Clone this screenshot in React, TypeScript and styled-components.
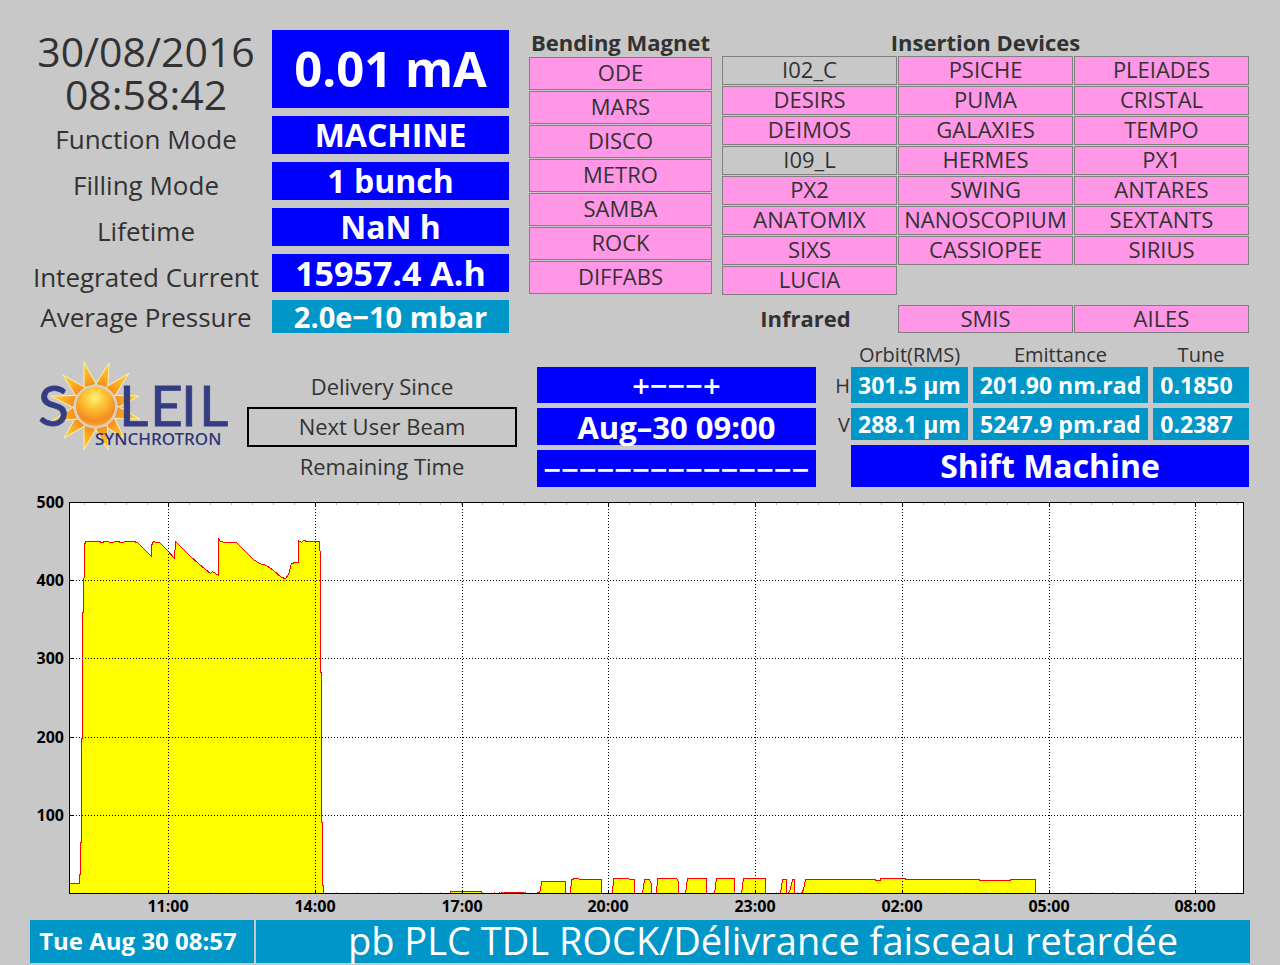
import React from "react";
import styled, { createGlobalStyle } from "styled-components";

const colors = {
  page: "#c8c8c8",
  ink: "#323232",
  blue: "#0000ff",
  teal: "#0096c8",
  pink: "#ff96e6",
  edge: "#808080",
};

const GlobalStyle = createGlobalStyle`
  *, *::before, *::after { box-sizing: border-box; }
  body {
    margin: 0;
    background: ${colors.page};
    color: ${colors.ink};
    font-family: "Open Sans", "Noto Sans", sans-serif;
  }
`;

const Page = styled.main`
  display: flex;
  flex-direction: column;
  padding: 30px 30px 2px;
`;

const Band = styled.section<{ $top?: number }>`
  display: flex;
  align-items: flex-start;
  margin: ${(p) => p.$top ?? 0}px 1px 0 0;
`;

const Part = styled.div<{ $grow: number; $left?: number; $top?: number }>`
  flex: ${(p) => p.$grow} 1 0;
  min-width: 0;
  margin-top: ${(p) => p.$top ?? 0}px;
  margin-left: ${(p) => p.$left ?? 0}px;
`;

/* Machine status */

const StatusGrid = styled.dl`
  display: grid;
  grid-template-columns: 232fr 237fr;
  grid-template-rows: 78px repeat(4, 38px) 33px;
  gap: 8px 10px;
  margin: 0;
`;

const Clock = styled.dt`
  align-self: start;
  text-align: center;
  font-size: 41px;
  line-height: 43px;
  white-space: nowrap;
`;

const StatusLabel = styled.dt<{ $drop?: boolean }>`
  display: flex;
  align-items: center;
  justify-content: center;
  padding-top: ${(p) => (p.$drop ? 8 : 0)}px;
  font-size: 26px;
  line-height: 30px;
  white-space: nowrap;
`;

const Readout = styled.dd<{ $size?: number; $teal?: boolean; $lift?: number }>`
  display: flex;
  align-items: center;
  justify-content: center;
  margin: 0;
  padding-bottom: ${(p) => p.$lift ?? 0}px;
  background: ${(p) => (p.$teal ? colors.teal : colors.blue)};
  color: #fff;
  font-size: ${(p) => p.$size ?? 32}px;
  font-weight: 700;
  line-height: 32px;
  white-space: nowrap;
`;

/* Beamlines */

const GroupTitle = styled.h2<{ $height: number }>`
  height: ${(p) => p.$height}px;
  margin: 0;
  text-align: center;
  font-size: 22px;
  font-weight: 700;
  line-height: 25px;
  white-space: nowrap;
`;

const BeamlineList = styled.ul<{ $columns: number; $row: number }>`
  display: grid;
  grid-template-columns: repeat(${(p) => p.$columns}, 1fr);
  grid-auto-rows: ${(p) => p.$row}px;
  gap: 1px;
  margin: 0;
  padding: 0;
  list-style: none;
`;

const Beamline = styled.li<{ $idle?: boolean }>`
  display: flex;
  align-items: center;
  justify-content: center;
  min-width: 0;
  padding-bottom: 3px;
  border: 1px solid ${colors.edge};
  background: ${(p) => (p.$idle ? "transparent" : colors.pink)};
  font-size: 22px;
  line-height: 24px;
  white-space: nowrap;
`;

const InfraredRow = styled.div`
  display: grid;
  grid-template-columns: 175fr 351fr;
  gap: 1px;
  margin-top: 10px;
`;

const InfraredTitle = styled.h2`
  margin: 0;
  padding-right: 8px;
  text-align: center;
  font-size: 22px;
  font-weight: 700;
  line-height: 27px;
`;

/* Delivery */

const DeliveryLabels = styled.div`
  display: grid;
  grid-auto-rows: 40px;
`;

const DeliveryLabel = styled.div<{ $framed?: boolean }>`
  display: flex;
  align-items: center;
  justify-content: center;
  padding-bottom: 2px;
  border: 2px solid ${(p) => (p.$framed ? "#000" : "transparent")};
  font-size: 22px;
  line-height: 24px;
  white-space: nowrap;
`;

const DeliveryValues = styled.div`
  display: grid;
  grid-template-rows: 36px 37px 37px;
  gap: 5px;
`;

const DeliveryValue = styled.div<{ $light?: boolean }>`
  display: flex;
  align-items: center;
  justify-content: center;
  background: ${colors.blue};
  color: #fff;
  font-size: 31px;
  font-weight: ${(p) => (p.$light ? 600 : 700)};
  line-height: 32px;
  white-space: nowrap;
`;

/* Beam parameters */

const BeamTable = styled.table`
  display: grid;
  grid-template-columns: 15px 117fr 175fr 96fr;
  grid-template-rows: 24px 41px 37px;
  column-gap: 5px;

  thead, tbody, tr { display: contents; }
`;

const ColumnHead = styled.th`
  padding: 0;
  font-size: 20px;
  font-weight: 400;
  line-height: 24px;
  white-space: nowrap;
`;

const RowHead = styled.th`
  display: flex;
  align-items: center;
  justify-content: flex-end;
  margin-right: -4px;
  padding: 0 0 4px;
  font-size: 20px;
  font-weight: 400;
`;

const BeamCell = styled.td`
  display: flex;
  align-items: center;
  justify-content: center;
  min-width: 0;
  margin-bottom: 5px;
  padding: 0;
  background: ${colors.teal};
  color: #fff;
  font-size: 23px;
  font-weight: 700;
  line-height: 24px;
  white-space: nowrap;

  &:last-child { padding-right: 9px; }
`;

const ShiftBanner = styled.div`
  display: flex;
  align-items: center;
  justify-content: center;
  height: 42px;
  margin-left: 20px;
  background: ${colors.blue};
  color: #fff;
  font-size: 32px;
  font-weight: 700;
  line-height: 32px;
`;

const LogoImage = styled.svg`
  display: block;
  width: 192px;
  height: 94px;
  margin-left: 7px;
`;

const ChartImage = styled.svg`
  display: block;
  width: 100%;
  height: auto;
`;

/* Message bar */

const MessageBar = styled.footer`
  display: grid;
  grid-template-columns: 224fr 994fr;
  gap: 2px;
`;

const MessageCell = styled.div`
  display: flex;
  align-items: center;
  justify-content: center;
  min-width: 0;
  height: 43px;
  background: ${colors.teal};
  color: #fff;
  line-height: 38px;
  white-space: nowrap;
`;

const MessageTime = styled(MessageCell)`
  padding: 0 8px 2px 0;
  font-size: 24px;
  font-weight: 700;
`;

const MessageText = styled(MessageCell)`
  padding: 0 0 4px 20px;
  font-size: 38px;
`;

const magnets = ["ODE", "MARS", "DISCO", "METRO", "SAMBA", "ROCK", "DIFFABS"];

const insertionDevices = [
  "I02_C", "PSICHE", "PLEIADES",
  "DESIRS", "PUMA", "CRISTAL",
  "DEIMOS", "GALAXIES", "TEMPO",
  "I09_L", "HERMES", "PX1",
  "PX2", "SWING", "ANTARES",
  "ANATOMIX", "NANOSCOPIUM", "SEXTANTS",
  "SIXS", "CASSIOPEE", "SIRIUS",
  "LUCIA",
];

const idle = new Set(["I02_C", "I09_L"]);

const SUN = { x: 58.5, y: 46.5 };

const rayTips: [number, number][] = [
  [47, 2], [72, 3], [92, 13], [102, 36], [103, 59], [87, 78],
  [71, 90], [47, 90], [27, 78], [15, 61], [14, 36], [26, 15],
];

function rayPath([tx, ty]: [number, number]) {
  const angle = Math.atan2(ty - SUN.y, tx - SUN.x);
  const at = (a: number) => `${SUN.x + 22 * Math.cos(a)} ${SUN.y + 22 * Math.sin(a)}`;
  return `M${at(angle - 0.29)}L${tx} ${ty}L${at(angle + 0.29)}Z`;
}

function Logo() {
  return (
    <LogoImage viewBox="0 0 192 94" role="img" aria-label="SOLEIL Synchrotron">
      <defs>
        <radialGradient id="disc" cx="0.48" cy="0.28" r="0.7">
          <stop offset="0" stopColor="#fff27a" />
          <stop offset="0.35" stopColor="#fdc836" />
          <stop offset="0.85" stopColor="#f58a1f" />
          <stop offset="1" stopColor="#f7a52a" />
        </radialGradient>
        <radialGradient id="rays" gradientUnits="userSpaceOnUse" cx={SUN.x} cy={SUN.y} r="46">
          <stop offset="0.45" stopColor="#f68b1f" />
          <stop offset="0.7" stopColor="#fbb026" />
          <stop offset="1" stopColor="#fdd03c" />
        </radialGradient>
      </defs>
      {rayTips.map((tip) => (
        <path key={tip.join()} d={rayPath(tip)} fill="url(#rays)" stroke="#fff2a8" strokeWidth="1" />
      ))}
      <circle cx={SUN.x} cy={SUN.y} r="22" fill="#d4d0c8" />
      <circle cx={SUN.x} cy={SUN.y} r="19.5" fill="url(#disc)" />
      <g
        fill="#343c82"
        stroke="#343c82"
        strokeWidth="0.8"
        fontFamily="Lato, sans-serif"
        fontSize="57"
        fontWeight="400"
      >
        <text x="1" y="66">S</text>
        <text x="82" y="66">L</text>
        <text x="113" y="66">E</text>
        <text x="144" y="66">I</text>
        <text x="162" y="66">L</text>
      </g>
      <text x="58" y="85" fill="#2c3478" fontFamily="Noto Sans, sans-serif" fontSize="17" fontWeight="500">
        SYNCHROTRON
      </text>
    </LogoImage>
  );
}

const PLOT = { left: 39, top: 15, width: 1174, height: 391 };

const timeTicks: [string, number][] = [
  ["11:00", 99], ["14:00", 246], ["17:00", 393], ["20:00", 539],
  ["23:00", 686], ["02:00", 833], ["05:00", 980], ["08:00", 1126],
];

const currentTicks: [string, number][] = [
  ["500", 0], ["400", 78], ["300", 156], ["200", 235], ["100", 313],
];

const minorTicks = Array.from({ length: 56 }, (_, i) => Math.round(15 + i * 20.97));

/* Stored current over the last day, in plot units: x from the left, y from the top. */
const current: [number, number][] = [
  [0, 381], [10, 381], [10, 372], [11, 372], [11, 340], [12, 340], [12, 236], [13, 236], [13, 110],
  [14, 110], [15, 43], [16, 39], [30, 39], [32, 40], [36, 39], [42, 40], [48, 39], [52, 40],
  [58, 39], [64, 39], [68, 40], [82, 54], [82, 43], [84, 39], [87, 40], [90, 40], [98, 48],
  [105, 56], [106, 39], [120, 53], [130, 62], [141, 71], [143, 69], [149, 73], [149, 36],
  [151, 39], [156, 40], [167, 40], [176, 49], [184, 57], [190, 61], [197, 63], [204, 68],
  [212, 75], [216, 76], [219, 72], [222, 61], [226, 60], [229, 60], [229, 38], [232, 40],
  [234, 38], [238, 39], [250, 39], [251, 57], [251, 170], [252, 170], [252, 320], [253, 320], [253, 383],
  [254, 383], [254, 391], [381, 391], [381, 389], [412, 389], [412, 391], [425, 391], [425, 389],
  [425, 391], [430, 391], [430, 389], [430, 391], [434, 390], [446, 390], [456, 390], [456, 391],
  [467, 391], [471, 389], [472, 379], [496, 379], [496, 391], [501, 391], [502, 377], [506, 376],
  [513, 377], [532, 377], [532, 391], [543, 391], [544, 376], [559, 376], [560, 377], [565, 377],
  [565, 391], [573, 391], [574, 384], [575, 377], [580, 377], [582, 382], [582, 391], [587, 391],
  [588, 376], [607, 376], [609, 379], [609, 391], [616, 391], [618, 376], [637, 376], [637, 391],
  [645, 391], [647, 376], [665, 376], [665, 391], [672, 391], [674, 376], [696, 376], [696, 391],
  [711, 391], [713, 377], [717, 377], [717, 391], [719, 391], [721, 386], [723, 377], [725, 377],
  [725, 391], [732, 391], [734, 387], [736, 377], [806, 377], [806, 378], [811, 378], [811, 376],
  [836, 376], [836, 377], [910, 377], [910, 378], [941, 378], [941, 377], [966, 377], [966, 391],
];

const curve = current.map(([x, y]) => `${x},${y}`).join(" ");

function CurrentChart() {
  return (
    <ChartImage viewBox="0 0 1220 433" role="img" aria-label="Stored current history">
      <g transform={`translate(${PLOT.left + 0.5} ${PLOT.top + 0.5})`} shapeRendering="crispEdges">
        <rect width={PLOT.width} height={PLOT.height} fill="#fff" />
        <polygon points={`0,391 ${curve}`} fill="#ffff00" />
        <polyline points={curve} fill="none" stroke="#ff0000" />
        {minorTicks.map((x) => (
          <path key={x} d={`M${x} 0v2M${x} ${PLOT.height}v-2`} stroke="#b4b4b4" />
        ))}
        {timeTicks.map(([label, x]) => (
          <g key={label} stroke="#000">
            <path d={`M${x} 0V${PLOT.height}`} strokeDasharray="1 2" />
            <path d={`M${x} 0v4M${x} ${PLOT.height}v-4`} />
          </g>
        ))}
        {currentTicks.slice(1).map(([label, y]) => (
          <g key={label} stroke="#000">
            <path d={`M0 ${y}H${PLOT.width}`} strokeDasharray="1 2" />
            <path d={`M0 ${y}h4`} />
          </g>
        ))}
        <rect width={PLOT.width} height={PLOT.height} fill="none" stroke="#000" />
      </g>
      <g
        transform={`translate(${PLOT.left} ${PLOT.top})`}
        fontFamily="Open Sans, sans-serif"
        fontSize="16"
        fontWeight="700"
        fill="#000"
      >
        {timeTicks.map(([label, x]) => (
          <text key={label} x={x} y="410" textAnchor="middle">{label}</text>
        ))}
        {currentTicks.map(([label, y]) => (
          <text key={label} x="-5" y={y + 6} textAnchor="end">{label}</text>
        ))}
      </g>
    </ChartImage>
  );
}

export default function App() {
  return (
    <>
      <GlobalStyle />
      <Page>
        <Band>
          <Part $grow={479}>
            <StatusGrid>
              <Clock>30/08/2016<br />08:58:42</Clock>
              <Readout $size={49} $lift={2}>0.01 mA</Readout>
              <StatusLabel $drop>Function Mode</StatusLabel>
              <Readout>MACHINE</Readout>
              <StatusLabel $drop>Filling Mode</StatusLabel>
              <Readout>1 bunch</Readout>
              <StatusLabel $drop>Lifetime</StatusLabel>
              <Readout>NaN h</Readout>
              <StatusLabel $drop>Integrated Current</StatusLabel>
              <Readout $size={34}>15957.4 A.h</Readout>
              <StatusLabel>Average Pressure</StatusLabel>
              <Readout $size={29} $teal>2.0e−10 mbar</Readout>
            </StatusGrid>
          </Part>
          <Part $grow={183} $left={20}>
            <GroupTitle $height={27}>Bending Magnet</GroupTitle>
            <BeamlineList $columns={1} $row={33}>
              {magnets.map((name) => <Beamline key={name}>{name}</Beamline>)}
            </BeamlineList>
          </Part>
          <Part $grow={527} $left={10}>
            <GroupTitle $height={26}>Insertion Devices</GroupTitle>
            <BeamlineList $columns={3} $row={29}>
              {insertionDevices.map((name) => (
                <Beamline key={name} $idle={idle.has(name)}>{name}</Beamline>
              ))}
            </BeamlineList>
            <InfraredRow>
              <InfraredTitle>Infrared</InfraredTitle>
              <BeamlineList $columns={2} $row={28}>
                <Beamline>SMIS</Beamline>
                <Beamline>AILES</Beamline>
              </BeamlineList>
            </InfraredRow>
          </Part>
        </Band>

        <Band $top={10}>
          <Part $grow={217} $top={17}>
            <Logo />
          </Part>
          <Part $grow={270} $top={24}>
            <DeliveryLabels>
              <DeliveryLabel>Delivery Since</DeliveryLabel>
              <DeliveryLabel $framed>Next User Beam</DeliveryLabel>
              <DeliveryLabel>Remaining Time</DeliveryLabel>
            </DeliveryLabels>
          </Part>
          <Part $grow={279} $left={20} $top={24}>
            <DeliveryValues>
              <DeliveryValue $light>+−−−+</DeliveryValue>
              <DeliveryValue>Aug–30 09:00</DeliveryValue>
              <DeliveryValue $light>−−−−−−−−−−−−−−−</DeliveryValue>
            </DeliveryValues>
          </Part>
          <Part $grow={418} $left={15}>
            <BeamTable>
              <thead>
                <tr>
                  <td />
                  <ColumnHead scope="col">Orbit(RMS)</ColumnHead>
                  <ColumnHead scope="col">Emittance</ColumnHead>
                  <ColumnHead scope="col">Tune</ColumnHead>
                </tr>
              </thead>
              <tbody>
                <tr>
                  <RowHead scope="row">H</RowHead>
                  <BeamCell>301.5 µm</BeamCell>
                  <BeamCell>201.90 nm.rad</BeamCell>
                  <BeamCell>0.1850</BeamCell>
                </tr>
                <tr>
                  <RowHead scope="row">V</RowHead>
                  <BeamCell>288.1 µm</BeamCell>
                  <BeamCell>5247.9 pm.rad</BeamCell>
                  <BeamCell>0.2387</BeamCell>
                </tr>
              </tbody>
            </BeamTable>
            <ShiftBanner>Shift Machine</ShiftBanner>
          </Part>
        </Band>

        <CurrentChart />

        <MessageBar>
          <MessageTime>Tue Aug 30 08:57</MessageTime>
          <MessageText>pb PLC TDL ROCK/Délivrance faisceau retardée</MessageText>
        </MessageBar>
      </Page>
    </>
  );
}
